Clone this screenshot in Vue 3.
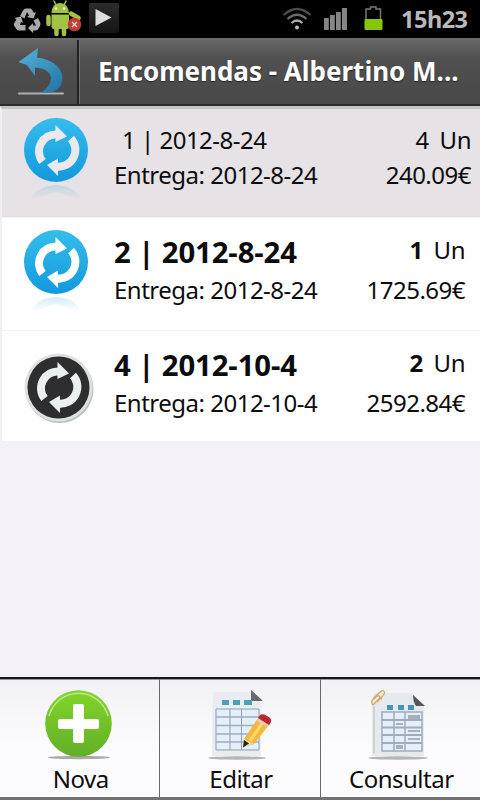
<script setup>
import { ref } from 'vue';

const title = ref('Encomendas - Albertino M...');

const orders = ref([
  { id: 1, date: '2012-8-24', delivery: '2012-8-24', qty: 4, total: '240.09€', synced: true, selected: true },
  { id: 2, date: '2012-8-24', delivery: '2012-8-24', qty: 1, total: '1725.69€', synced: true, selected: false },
  { id: 4, date: '2012-10-4', delivery: '2012-10-4', qty: 2, total: '2592.84€', synced: false, selected: false },
]);

const select = (order) => {
  orders.value.forEach((o) => {
    o.selected = o.id === order.id;
  });
};
</script>

<template>
  <div class="screen">
    <div class="status-bar">
      <svg class="recycle" width="28" height="26" viewBox="0 0 28 26">
        <g fill="#a9a9a9">
          <path d="M7 8 L10 2.500 Q11 .5 13 .5 H17 Q18.500 .5 19.500 2.500 L21 5 L23 4 L20.500 10.500 L14 9 L16 7.500 L14 4 L11.500 10.500 Z" />
          <path d="M20.500 12.500 L25 10 L27 14 Q28 16 27 18 L25.500 20.500 Q24.500 22.500 22.500 22.500 H20 V25 L15 20 L20 15 V17.500 H23 Z" />
          <path d="M3.500 11.500 L1.500 10 L8 8.500 L10 15 L8 14 L7 17 H12.500 V22.500 H6 Q4 22.500 3 20.500 L1.300 18 Q.5 16.500 1.300 15 Z" />
        </g>
      </svg>
      <svg class="android" width="37" height="38" viewBox="0 0 37 38">
        <g fill="#a2c145" stroke="#a2c145" stroke-linecap="round">
          <path d="M11 5 L9 1 M19 5 L21 1" stroke-width="1.500" />
          <path d="M6.500 13 Q7 3 15 3 Q23 3 24 13 Z" stroke="none" />
          <path d="M6.500 14.500 H24 V27 Q24 29 22 29 H9 Q6.500 29 6.500 27 Z" stroke="none" />
          <path d="M3.500 17 V24 M26 13.500 L33.500 18" stroke-width="4.500" />
          <path d="M11.500 28 V34 M19 28 V34" stroke-width="4.500" />
        </g>
        <circle cx="11" cy="8.500" r="1.200" fill="#f4f7e6" />
        <circle cx="19" cy="8.500" r="1.200" fill="#f4f7e6" />
        <circle cx="29.500" cy="24.500" r="6.800" fill="#c43c35" />
        <path d="M27 22 L32 27 M32 22 L27 27" stroke="#f3d6d3" stroke-width="1.400" />
      </svg>
      <svg class="play" width="30" height="30" viewBox="0 0 30 30">
        <defs>
          <linearGradient id="play" x1="0" y1="0" x2="0" y2="1">
            <stop offset="0" stop-color="#2c2c2c" />
            <stop offset="1" stop-color="#151515" />
          </linearGradient>
        </defs>
        <rect width="30" height="30" rx="2" fill="url(#play)" />
        <path d="M6.500 6 L22.500 14.500 L6.500 23 Z" fill="#dedede" />
      </svg>
      <span class="spacer"></span>
      <svg class="wifi" width="30" height="24" viewBox="0 0 30 24">
        <g fill="none" stroke-width="2.200">
          <path d="M1.500 8 Q15 -4 28.500 8" stroke="#4c4c4c" />
          <path d="M5.500 12 Q15 3.500 24.500 12" stroke="#6c6c6c" />
          <path d="M9.500 16 Q15 11 20.500 16" stroke="#aaa" />
        </g>
        <circle cx="15" cy="20.500" r="2" fill="#bbb" />
      </svg>
      <svg class="signal" width="24" height="22" viewBox="0 0 24 22">
        <g fill="#858585">
          <rect x="0" y="10" width="4.800" height="12" />
          <rect x="6" y="7" width="4.800" height="15" />
          <rect x="12" y="4" width="4.800" height="18" />
          <rect x="18" y="0" width="5" height="22" />
        </g>
      </svg>
      <svg class="battery" width="19" height="25" viewBox="0 0 19 25">
        <path d="M2 13 V3 H6.500 V1 H12 V3 H16.500 V13" fill="none" stroke="#777" stroke-width="1.500" />
        <rect x=".5" y="13" width="18" height="11" rx="1" fill="#86c60a" />
      </svg>
      <span class="clock">15h23</span>
    </div>

    <header class="header">
      <button class="back">
        <svg width="48" height="50" viewBox="0 0 48 50">
          <defs>
            <linearGradient id="back" x1="0" y1="0" x2=".8" y2="1">
              <stop offset="0" stop-color="#58b3df" />
              <stop offset="1" stop-color="#2677a5" />
            </linearGradient>
          </defs>
          <rect x="1" y="44.500" width="46" height="2" rx="1" fill="#b0b0b0" />
          <path
            fill="url(#back)"
            d="M1.500 14 L21 0 L20 9.500 Q33 11 40 18 Q47 25 45 34 Q43 42 34 44.500 H24 Q33 39 34 31 Q34 21 18 19.500 L18 28 L10 17 Z"
          />
        </svg>
      </button>
      <h1 class="title">{{ title }}</h1>
    </header>

    <ul class="orders">
      <li
        v-for="order in orders"
        :key="order.id"
        class="order"
        :class="{ selected: order.selected }"
        @click="select(order)"
      >
        <svg class="sync" width="72" height="92" viewBox="0 0 72 92">
          <defs>
            <linearGradient id="blue" x1="0" y1="0" x2="0" y2="1">
              <stop offset="0" stop-color="#35bdeb" />
              <stop offset="1" stop-color="#1299de" />
            </linearGradient>
            <linearGradient id="reflection" x1="0" y1="0" x2="0" y2="1">
              <stop offset="0" stop-color="#59b8d8" stop-opacity=".25" />
              <stop offset="1" stop-color="#59b8d8" stop-opacity="0" />
            </linearGradient>
          </defs>
          <template v-if="order.synced">
            <path d="M8 84 Q15 70 34 69 Q53 70 60 84 Q46 80 34 76 Q22 80 8 84 Z" fill="url(#reflection)" />
            <circle cx="34" cy="34" r="32" fill="url(#blue)" />
          </template>
          <template v-else>
            <circle cx="37.500" cy="48" r="34" fill="#b8c0be" />
            <circle cx="36.500" cy="46.500" r="34" fill="#dde2e1" />
            <circle cx="36.500" cy="46.500" r="31" fill="#2e2e30" />
          </template>
          <g :class="{ low: !order.synced }" class="arrows">
            <path class="arc" d="M20.500 45.500 A16.800 16.800 0 0 1 35 18.500" />
            <path d="M33.500 9 L45 20.500 L33.500 26 Z" />
            <path class="arc" d="M49 22.500 A16.800 16.800 0 0 1 34.500 50.500" />
            <path d="M36 60 L25 49 L36 42.500 Z" />
          </g>
        </svg>
        <div class="info">
          <p class="name">{{ order.id }} | {{ order.date }}</p>
          <p class="line">Entrega: {{ order.delivery }}</p>
        </div>
        <div class="amount">
          <p class="qty"><span class="count">{{ order.qty }}</span><span>Un</span></p>
          <p class="line">{{ order.total }}</p>
        </div>
      </li>
    </ul>

    <nav class="toolbar">
      <button class="tool">
        <svg width="72" height="72" viewBox="0 0 72 72">
          <defs>
            <linearGradient id="green" x1="0" y1="0" x2="0" y2="1">
              <stop offset="0" stop-color="#83d52b" />
              <stop offset="1" stop-color="#61af27" />
            </linearGradient>
          </defs>
          <ellipse cx="35" cy="69.500" rx="31" ry="1.700" fill="#aaa" />
          <circle cx="34.500" cy="35.500" r="33.300" fill="url(#green)" />
          <path d="M5 28 A30.500 30.500 0 0 1 64 28" fill="none" stroke="#b9ea88" stroke-width="1.500" />
          <path d="M31 16 H38 Q40 16 40 18 V31 H53 Q55 31 55 33 V39 Q55 41 53 41 H40 V53 Q40 55 38 55 H31 Q29 55 29 53 V41 H16 Q14 41 14 39 V33 Q14 31 16 31 H29 V18 Q29 16 31 16 Z" fill="#fff" />
        </svg>
        <span>Nova</span>
      </button>
      <button class="tool">
        <svg width="72" height="72" viewBox="0 0 72 72">
          <ellipse cx="33" cy="70" rx="29" ry="1.700" fill="#b5b5b5" />
          <path d="M9 4 H45 L57 15 V68 H8 Z" fill="#e9edf1" />
          <path d="M47 2 V13 H59 Z" fill="#68686d" />
          <g fill="#4aa1b8">
            <rect x="18" y="12" width="7" height="5" />
            <rect x="29" y="12" width="7" height="5" />
            <rect x="40" y="12" width="8" height="5" />
          </g>
          <path d="M12 21 H55 V62 H12 Z" fill="#e4eff9" />
          <path d="M12 29 H55 M12 37.500 H55 M12 46 H55 M12 54 H55" stroke="#9aafc9" stroke-width="1.500" />
          <path d="M12 21 H55 V62 H12 Z M26 21 V62 M37.500 21 V62" fill="none" stroke="#8d9fb6" />
          <path d="M40 51 L54 30 L65 37 L50 56 L39 59 Z" fill="#f6b83c" />
          <path d="M46 53 L59 34" stroke="#ffd86e" stroke-width="3" />
          <path d="M40 51 L50 56 L39 59 Z" fill="#eed5ac" />
          <path d="M40 52 L45 55.500 L39 59.500 Z" fill="#222" />
          <path d="M54 30 L65 37 L63.500 39.500 L52.500 32.500 Z" fill="#e8c9bd" />
          <path d="M54 30 L56 27 Q59 25 63 28 Q68 30 67 34 L65 37 Z" fill="#b9282d" />
        </svg>
        <span>Editar</span>
      </button>
      <button class="tool">
        <svg width="72" height="72" viewBox="0 0 72 72">
          <ellipse cx="34" cy="70" rx="30" ry="1.700" fill="#b5b5b5" />
          <path d="M10 5 H48 L60 18 V68 H8 V14 Z" fill="#e7eaec" />
          <path d="M10 18 V65" stroke="#cfd3d6" stroke-width="2" />
          <path d="M49 7 Q49 14 52 18 H61 Z" fill="#55555d" />
          <g fill="#4595b8">
            <rect x="23" y="17" width="6" height="5" />
            <rect x="34" y="17" width="6" height="5" />
            <rect x="44" y="17" width="6" height="5" />
          </g>
          <path d="M18 24 H58 V63 H18 Z" fill="#e3f0fa" />
          <path d="M18 32 H58 M18 39.500 H58 M18 47 H58 M18 55 H58" stroke="#a0acba" stroke-width="2" />
          <path d="M18 24 H58 V63 H18 Z M30 24 V63 M41 24 V63" fill="none" stroke="#a0acba" stroke-width="1.500" />
          <path d="M44 28 H56 M44 30 H56 M32 36 H39 M44 43 H56 M44 51 H56 M32 58 H39 M32 60 H39" stroke="#979ca5" stroke-width="1.300" />
          <g fill="none" stroke="#d7a767" stroke-width="1.300">
            <path d="M9 17 Q6 14 10 10 L15 5 Q19 1 20.500 4 Q21 6 17 10 L13 14" />
            <path d="M9 17 L14 12 Q17 9 15 8 Q13 7 10 11 M14 7 L18 11" />
          </g>
        </svg>
        <span>Consultar</span>
      </button>
    </nav>
  </div>
</template>

<style>
body {
  margin: 0;
}
</style>

<style scoped>
.screen {
  display: flex;
  flex-direction: column;
  width: 480px;
  height: 800px;
  overflow: hidden;
  background: #f4f2f6;
  color: #0c0c0c;
  font-family: 'Noto Sans', 'Open Sans', sans-serif;
  font-size: 24px;
  letter-spacing: -0.5px;
}
p,
h1,
ul {
  margin: 0;
  padding: 0;
}
button {
  border: 0;
  padding: 0;
  background: none;
  color: inherit;
  font: inherit;
  letter-spacing: inherit;
}

.status-bar {
  display: flex;
  align-items: center;
  height: 38px;
  box-sizing: border-box;
  padding: 0 12px 0 13px;
  background: #000;
}
.recycle {
  margin-top: 3px;
}
.android {
  margin-left: 4px;
}
.play {
  margin-left: 7px;
  margin-bottom: 2px;
}
.spacer {
  flex: 1;
}
.signal {
  margin-left: 12px;
}
.battery {
  margin-left: 16px;
  margin-bottom: 2px;
}
.clock {
  width: 67px;
  margin-left: 18px;
  color: #b9b9b9;
  font-size: 23.5px;
  font-weight: 700;
  line-height: 38px;
  white-space: nowrap;
}

.header {
  display: flex;
  height: 68px;
  box-sizing: border-box;
  border-top: 2px solid #6b6b6b;
  border-bottom: 2px solid #2b2b2b;
  background: linear-gradient(#666 0, #505050 28%, #484848 100%);
}
.back {
  display: flex;
  align-items: center;
  justify-content: center;
  width: 79px;
  box-sizing: border-box;
  border-right: 2px solid #222;
  padding: 2px 0 0 4px;
}
.title {
  flex: 1;
  border-left: 1px solid #707070;
  padding-left: 18px;
  color: #fff;
  font-size: 26px;
  font-weight: 700;
  letter-spacing: 0;
  line-height: 62px;
  text-shadow: 0 1px 1px #222;
  white-space: nowrap;
}

.orders {
  flex: 1;
  list-style: none;
}
.order {
  display: flex;
  height: 111px;
  box-sizing: border-box;
  border-left: 2px solid #f0eff2;
  border-top: 1px solid #f3f2f5;
  padding: 14px 15px 0 20px;
  background: #fff;
}
.order:nth-child(2) {
  height: 113px;
}
.order.selected {
  border-top: 3px solid #c4c3c5;
  padding: 13px 9px 0 20px;
  background: #e6e2e6;
}
.sync {
  flex: none;
  margin-top: -4px;
}
.order.selected .sync {
  margin-top: -6px;
}
.arrows {
  fill: #fff;
  color: #fff;
}
.arc {
  fill: none;
  stroke: currentColor;
  stroke-width: 8;
}
.selected .arrows {
  fill: #ebe9ee;
  color: #ebe9ee;
}
.arrows.low {
  fill: #eceff0;
  color: #eceff0;
  transform: translate(2px, 12px);
}
.info {
  flex: 1;
  padding-left: 20px;
  white-space: nowrap;
}
.name {
  font-size: 29.3px;
  font-weight: 700;
  letter-spacing: -0.1px;
  line-height: 41px;
}
.line {
  line-height: 35px;
}
.name + .line {
  margin-top: -1px;
}
.selected .name {
  padding-left: 8px;
  font-size: 24px;
  font-weight: 400;
  letter-spacing: -0.5px;
  line-height: 35px;
}
.selected .name + .line {
  margin-top: 0;
}
.amount {
  text-align: right;
}
.qty {
  display: flex;
  justify-content: flex-end;
  gap: 11px;
  margin-bottom: 5px;
  line-height: 35px;
}
.count {
  font-weight: 700;
}
.selected .qty {
  margin-bottom: 0;
}
.selected .count {
  font-weight: 400;
}

.toolbar {
  display: flex;
  height: 123px;
  box-sizing: border-box;
  border-top: 2px solid #18181b;
  border-bottom: 3px solid #737373;
  background: linear-gradient(#f2f1f5, #fcfbfd 60%);
}
.tool {
  display: flex;
  flex: 1;
  flex-direction: column;
  align-items: center;
  border-top: 1px solid #98989b;
  border-right: 1px solid #68686b;
  padding-top: 8px;
  line-height: 37px;
}
.tool span {
  padding-left: 2px;
}
.tool:last-child {
  border-right: 0;
}
</style>
